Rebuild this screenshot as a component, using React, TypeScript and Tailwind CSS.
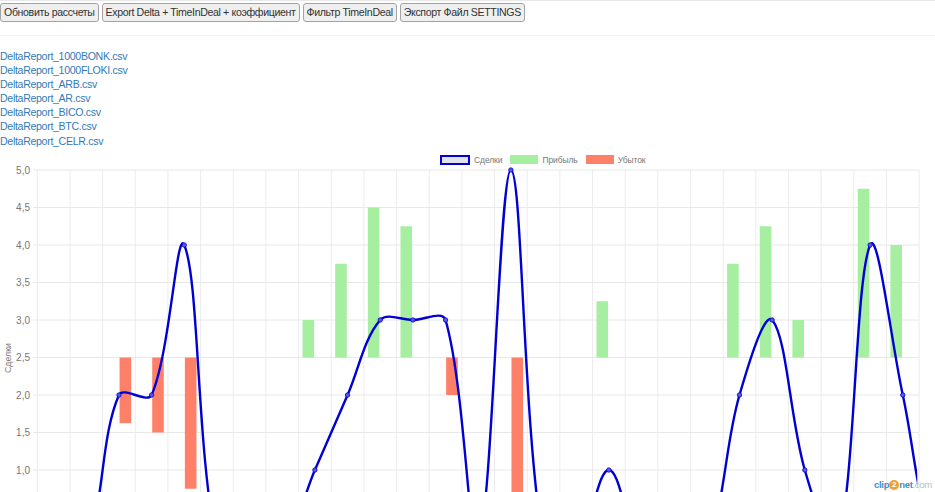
const buttons = ["Обновить рассчеты", "Export Delta + TimeInDeal + коэффициент", "Фильтр TimeInDeal", "Экспорт Файл SETTINGS"];
const files = ["1000BONK", "1000FLOKI", "ARB", "AR", "BICO", "BTC", "CELR"];

const LEFT = 37.3;
const STEP = 32.66;
const TOP = 22;
const UNIT = 75;
const cx = (i: number) => LEFT + STEP * (i + 0.5);
const vy = (v: number) => TOP + (5 - v) * UNIT;

const deals = [0, 0, 2, 2, 4, 0, 0, 0, 1, 2, 3, 3, 3, 0, 5, 0, 0, 1, 0, 0, 0, 2, 3, 1, 0, 4, 2, 0, 0];
const profit: [number, number][] = [[8, 3], [9, 3.75], [10, 4.5], [11, 4.25], [17, 3.25], [21, 3.75], [22, 4.25], [23, 3], [25, 4.75], [26, 4]];
const loss: [number, number][] = [[2, 1.625], [3, 1.5], [4, 0.75], [12, 2], [14, 0]];
const ticks = [5, 4.5, 4, 3.5, 3, 2.5, 2, 1.5, 1];

function splinePath(values: number[]) {
  const pts = values.map((v, i) => ({ x: cx(i), y: vy(v) }));
  const t = 0.35;
  const cps = pts.map((p, i) => {
    const a = pts[i - 1] ?? p;
    const b = pts[i + 1] ?? p;
    const d01 = Math.hypot(p.x - a.x, p.y - a.y);
    const d12 = Math.hypot(b.x - p.x, b.y - p.y);
    const sum = d01 + d12 || 1;
    const fa = (t * d01) / sum;
    const fb = (t * d12) / sum;
    return {
      px: p.x - fa * (b.x - a.x),
      py: p.y - fa * (b.y - a.y),
      nx: p.x + fb * (b.x - a.x),
      ny: p.y + fb * (b.y - a.y),
    };
  });
  let d = `M${pts[0].x} ${pts[0].y}`;
  for (let i = 1; i < pts.length; i++) {
    d += `C${cps[i - 1].nx} ${cps[i - 1].ny} ${cps[i].px} ${cps[i].py} ${pts[i].x} ${pts[i].y}`;
  }
  return d;
}

const LegendItem = ({ label, box }: { label: string; box: string }) => (
  <div className="flex items-center gap-[4px]">
    <span className={box} />
    <span>{label}</span>
  </div>
);

export default function App() {
  return (
    <div className="relative h-[492px] w-[935px] overflow-hidden bg-white font-['Liberation_Sans',Arial,sans-serif]">
      <div className="h-[1px] bg-[#e8e8e8]" />
      <div className="flex gap-[3px] pt-[2px]">
        {buttons.map((b) => (
          <button
            key={b}
            className="h-[18.5px] rounded-[3px] border border-[#a3a3a3] bg-[#efefef] px-[3px] text-[10.6px] leading-none tracking-[-0.36px] text-[#333]"
          >
            {b}
          </button>
        ))}
      </div>
      <div className="mt-[13.5px] h-[1px] bg-[#f2f2f2]" />
      <div className="mt-[13px] flex flex-col items-start">
        {files.map((f) => (
          <a key={f} className="h-[14.1px] text-[10.6px] leading-[14.1px] tracking-[-0.32px] text-[#337ab7]">
            DeltaReport_{f}.csv
          </a>
        ))}
      </div>
      <div className="relative h-[344px]">
        <div className="absolute left-[440px] top-[7px] flex gap-[8px] text-[8.5px] leading-[10px] tracking-[-0.1px] text-[#777]">
          <LegendItem label="Сделки" box="h-[10px] w-[30px] border-2 border-[#0000d4] bg-[#e2e2ee]" />
          <LegendItem label="Прибыль" box="h-[9px] w-[28px] bg-[#a6eea0]" />
          <LegendItem label="Убыток" box="h-[9px] w-[28px] bg-[#ff8069]" />
        </div>
        <svg width="935" height="344" viewBox="0 0 935 344" className="block">
          <defs>
            <clipPath id="plot">
              <rect x={LEFT} y={TOP - 4} width={880} height={340} />
            </clipPath>
          </defs>
          {Array.from({ length: 28 }, (_, i) => (
            <line key={i} x1={LEFT + STEP * i} x2={LEFT + STEP * i} y1={TOP} y2={344} stroke="#ececec" strokeWidth="1" />
          ))}
          {ticks.map((v) => (
            <g key={v}>
              <line x1={LEFT - 4} x2={919} y1={vy(v)} y2={vy(v)} stroke="#e8e8e8" strokeWidth="1" />
              <text x={30} y={vy(v) + 3.5} textAnchor="end" fontSize="10" fill="#777">
                {v.toFixed(1).replace(".", ",")}
              </text>
            </g>
          ))}
          <text transform="translate(11 210) rotate(-90)" textAnchor="middle" fontSize="8.8" fill="#777">
            Сделки
          </text>
          {profit.map(([i, v]) => (
            <rect key={i} x={cx(i) - 12.4} width={11.6} y={vy(v)} height={vy(2.5) - vy(v)} fill="#a6eea0" />
          ))}
          {loss.map(([i, v]) => (
            <rect key={i} x={cx(i) + 0.6} width={11.6} y={vy(2.5)} height={vy(v) - vy(2.5)} fill="#ff8069" />
          ))}
          <g clipPath="url(#plot)">
            <path d={splinePath(deals)} fill="none" stroke="#0000d4" strokeWidth="2.4" />
            {deals.map((v, i) => (
              <circle key={i} cx={cx(i)} cy={vy(v)} r="2.2" fill="#5a5ae0" stroke="#0000d4" strokeWidth="0.8" />
            ))}
          </g>
        </svg>
      </div>
      <div className="absolute left-[874px] top-[478px] flex items-center text-[9.5px] font-bold leading-[14px] tracking-[-0.3px] text-[#3f8fc4]">
        <span>clip</span>
        <span className="flex h-[10px] w-[10px] items-center justify-center rounded-full bg-[#f0a030] text-[8px] text-white">2</span>
        <span>net</span>
        <span className="font-normal text-[#a9bfcc]">.com</span>
      </div>
    </div>
  );
}
